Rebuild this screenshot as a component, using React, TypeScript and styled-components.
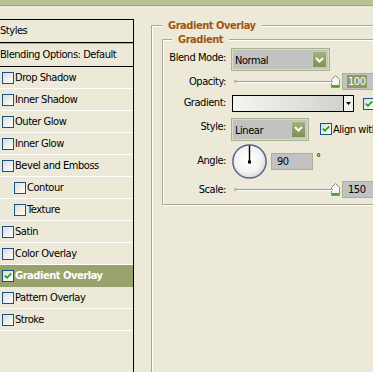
import React from 'react';
import styled, { createGlobalStyle } from 'styled-components';

const beige = '#ece9d8';
const olive = '#98a26d';
const groupLine = '#aca899';
const fieldBorder = '#a7b38b';
const fieldFill = '#c2c2c2';
const boxBlue = '#1c5180';

const GlobalStyle = createGlobalStyle`
  html, body {
    margin: 0;
    padding: 0;
    background: ${beige};
    overflow: hidden;
  }
  body {
    font-family: "DejaVu Sans Condensed", "Liberation Sans", sans-serif;
    font-size: 11px;
    letter-spacing: -0.45px;
    color: #000;
  }
`;

const Window = styled.div`
  width: 373px;
  height: 372px;
  overflow: hidden;
  display: flex;
  flex-direction: column;
`;

const TitleStrip = styled.div`
  flex: none;
  height: 5px;
  background: #b6c28f;
  border-bottom: 1px solid #9aa66c;
`;

const Body = styled.div`
  flex: 1;
  min-height: 0;
  display: flex;
  align-items: flex-start;
`;

/* ---------- left list ---------- */

const StylesList = styled.div`
  flex: none;
  align-self: stretch;
  width: 134px;
  box-sizing: border-box;
  margin-top: 13px;
  border-top: 1px solid #000;
  border-right: 1px solid #000;
`;

const ListHeader = styled.div<{ $first?: boolean }>`
  height: 22px;
  line-height: 22px;
  white-space: nowrap;
  border-top: ${p => (p.$first ? 'none' : `1px solid ${groupLine}`)};
  border-bottom: 1px solid #000;
`;

const ListItem = styled.div<{ $active?: boolean; $indent?: boolean }>`
  height: 21px;
  display: flex;
  align-items: center;
  gap: 1px;
  padding-left: ${p => (p.$indent ? 14 : 2)}px;
  border-bottom: 1px solid ${p => (p.$active ? olive : '#fff')};
  background: ${p => (p.$active ? olive : 'transparent')};
  color: ${p => (p.$active ? '#fff' : '#000')};
  font-weight: ${p => (p.$active ? 'bold' : 'normal')};
  white-space: nowrap;
`;

const Box = styled.span`
  flex: none;
  width: 12px;
  height: 12px;
  box-sizing: border-box;
  border: 1px solid ${boxBlue};
  background: linear-gradient(135deg, #dcdcd7, #ffffff);
  display: inline-flex;
  align-items: center;
  justify-content: center;
`;

const CheckBox = ({ checked }: { checked?: boolean }) => (
  <Box>
    {checked && (
      <svg width="8" height="8" viewBox="0 0 8 8">
        <path d="M0.8 3.6 L3 5.8 L7.2 1.4" stroke="#21a121" strokeWidth="1.8" fill="none" />
      </svg>
    )}
  </Box>
);

const effects = [
  { label: 'Drop Shadow' },
  { label: 'Inner Shadow' },
  { label: 'Outer Glow' },
  { label: 'Inner Glow' },
  { label: 'Bevel and Emboss' },
  { label: 'Contour', indent: true },
  { label: 'Texture', indent: true },
  { label: 'Satin' },
  { label: 'Color Overlay' },
  { label: 'Gradient Overlay', active: true },
  { label: 'Pattern Overlay' },
  { label: 'Stroke' },
];

/* ---------- right panel ---------- */

const Group = styled.fieldset<{ $width: number; $height?: number; $top: number; $left: number; $pad: string }>`
  flex: none;
  min-width: 0;
  width: ${p => p.$width}px;
  ${p => (p.$height ? `height: ${p.$height}px;` : '')}
  margin: ${p => p.$top}px 0 0 ${p => p.$left}px;
  padding: ${p => p.$pad};
  border: 1px solid ${groupLine};
  box-shadow: inset 1px 1px 0 #fff, 1px 1px 0 #fff;
`;

const GroupTitle = styled.legend<{ $inset?: number }>`
  margin-left: ${p => p.$inset ?? 0}px;
  padding: 1px 6px 0;
  line-height: 13px;
  font-weight: bold;
  color: #a0560e;
  background: ${beige};
  white-space: nowrap;
`;

const Row = styled.div<{ $h: number; $mt: number }>`
  display: grid;
  grid-template-columns: 61px auto;
  column-gap: 5px;
  align-items: center;
  height: ${p => p.$h}px;
  margin-top: ${p => p.$mt}px;
`;

const Label = styled.div<{ $raise?: number }>`
  text-align: right;
  white-space: nowrap;
  margin-bottom: ${p => (p.$raise ?? 0) * 2}px;
`;

const Controls = styled.div`
  display: flex;
  align-items: center;
  white-space: nowrap;
`;

const Select = styled.div<{ $width: number }>`
  flex: none;
  width: ${p => p.$width}px;
  height: 23px;
  box-sizing: border-box;
  border: 1px solid ${fieldBorder};
  box-shadow: inset 0 0 0 1px #d7dcc3;
  background: ${fieldFill};
  display: flex;
  align-items: center;
  padding: 2px;
`;

const SelectText = styled.span`
  flex: 1;
  padding: 2px 0 0 1px;
`;

const SelectButton = styled.span`
  flex: none;
  width: 15px;
  height: 17px;
  box-sizing: border-box;
  border: 1px solid #c6cfac;
  background: linear-gradient(#a3b27b, #7f9054);
  display: flex;
  align-items: center;
  justify-content: center;
`;

const Chevron = () => (
  <svg width="9" height="6" viewBox="0 0 9 6">
    <path d="M1 1 L4.5 4.5 L8 1" stroke="#fff" strokeWidth="2" fill="none" />
  </svg>
);

const Slider = styled.div`
  flex: none;
  width: 111px;
  display: flex;
  align-items: center;
`;

const Track = styled.div`
  flex: none;
  width: 98px;
  height: 1px;
  margin-left: 4px;
  background: #9c9a94;
  border-bottom: 1px solid #fff;
  border-radius: 1px;
  position: relative;
  &::before {
    content: '';
    position: absolute;
    left: -1px;
    top: -1px;
    width: 3px;
    height: 3px;
    border-radius: 50%;
    background: #b4b2ac;
  }
`;

const ThumbWrap = styled.span`
  flex: none;
  margin-left: -2px;
  display: flex;
`;

const Thumb = () => (
  <ThumbWrap>
    <svg width="9" height="13" viewBox="0 0 9 13">
      <path d="M0.5 4.5 L4.5 0.5 L8.5 4.5 V12.5 H0.5 Z" fill="#f7f7f5" stroke="#8e8e8a" />
      <rect x="1" y="10" width="7" height="2" fill="#52a22e" />
    </svg>
  </ThumbWrap>
);

const NumberField = styled.div<{ $width: number; $gap: number }>`
  flex: none;
  width: ${p => p.$width}px;
  height: 17px;
  margin-left: ${p => p.$gap}px;
  box-sizing: border-box;
  border: 1px solid ${fieldBorder};
  background: ${fieldFill};
  padding-left: 5px;
  line-height: 15px;
`;

const Selected = styled.span`
  background: #8d9a62;
  color: #fff;
  margin-left: -1px;
  padding: 0 1px;
`;

const GradientPicker = styled.div`
  flex: none;
  width: 122px;
  height: 17px;
  margin-left: 1px;
  box-sizing: border-box;
  border: 1px solid #000;
  display: flex;
`;

const GradientSwatch = styled.div`
  flex: 1;
  background: linear-gradient(to right, #f5f5f2, #d2d2cd);
  border-right: 1px solid #000;
`;

const GradientArrow = styled.div`
  flex: none;
  width: 9px;
  background: #f1f0ea;
  display: flex;
  align-items: center;
  justify-content: center;
`;

const Spaced = styled.span<{ $gap: number }>`
  margin-left: ${p => p.$gap}px;
  display: inline-flex;
  align-items: center;
  gap: 1px;
`;

const DialWrap = styled.span`
  flex: none;
  display: flex;
  margin-left: 1px;
`;

const Degree = styled.span`
  margin-left: 3px;
  align-self: flex-start;
  margin-top: 10px;
  line-height: 8px;
`;

const AngleDial = () => (
  <DialWrap>
    <svg width="35" height="35" viewBox="0 0 35 35">
      <defs>
        <radialGradient id="dialFill" cx="45%" cy="42%" r="62%">
          <stop offset="0" stopColor="#ffffff" />
          <stop offset="0.65" stopColor="#f3f3f1" />
          <stop offset="1" stopColor="#d2d2cd" />
        </radialGradient>
      </defs>
      <circle cx="17.5" cy="17.5" r="16.6" fill="url(#dialFill)" stroke="#56648f" strokeWidth="1.5" />
      <line x1="17.5" y1="18" x2="17.5" y2="1.5" stroke="#000" strokeWidth="1.4" />
      <rect x="16" y="16.5" width="3" height="3" fill="#000" />
    </svg>
  </DialWrap>
);

export default function App() {
  return (
    <Window>
      <GlobalStyle />
      <TitleStrip />
      <Body>
        <StylesList>
          <ListHeader $first>Styles</ListHeader>
          <ListHeader>Blending Options: Default</ListHeader>
          {effects.map(e => (
            <ListItem key={e.label} $active={e.active} $indent={e.indent}>
              <CheckBox checked={e.active} />
              {e.label}
            </ListItem>
          ))}
        </StylesList>

        <Group $width={262} $height={400} $top={12} $left={17} $pad="0 0 0 10px">
          <GroupTitle>Gradient Overlay</GroupTitle>
          <Group $width={230} $top={0} $left={0} $pad="0 0 6px 2px">
            <GroupTitle $inset={7}>Gradient</GroupTitle>

            <Row $h={23} $mt={2}>
              <Label $raise={2.5}>Blend Mode:</Label>
              <Controls>
                <Select $width={99}>
                  <SelectText>Normal</SelectText>
                  <SelectButton><Chevron /></SelectButton>
                </Select>
              </Controls>
            </Row>

            <Row $h={17} $mt={2}>
              <Label>Opacity:</Label>
              <Controls>
                <Slider>
                  <Track />
                  <Thumb />
                </Slider>
                <NumberField $width={40} $gap={0}><Selected>100</Selected></NumberField>
              </Controls>
            </Row>

            <Row $h={17} $mt={5}>
              <Label $raise={1.5}>Gradient:</Label>
              <Controls>
                <GradientPicker>
                  <GradientSwatch />
                  <GradientArrow>
                    <svg width="5" height="3" viewBox="0 0 5 3"><path d="M0 0 H5 L2.5 3 Z" fill="#000" /></svg>
                  </GradientArrow>
                </GradientPicker>
                <Spaced $gap={9}><CheckBox checked />Reverse</Spaced>
              </Controls>
            </Row>

            <Row $h={24} $mt={5}>
              <Label $raise={3}>Style:</Label>
              <Controls>
                <Select $width={78}>
                  <SelectText>Linear</SelectText>
                  <SelectButton><Chevron /></SelectButton>
                </Select>
                <Spaced $gap={11}><CheckBox checked />Align with Layer</Spaced>
              </Controls>
            </Row>

            <Row $h={36} $mt={2}>
              <Label $raise={1}>Angle:</Label>
              <Controls>
                <AngleDial />
                <NumberField $width={42} $gap={4}>90</NumberField>
                <Degree>°</Degree>
              </Controls>
            </Row>

            <Row $h={17} $mt={2}>
              <Label>Scale:</Label>
              <Controls>
                <Slider>
                  <Track />
                  <Thumb />
                </Slider>
                <NumberField $width={40} $gap={0}>150</NumberField>
              </Controls>
            </Row>
          </Group>
        </Group>
      </Body>
    </Window>
  );
}
